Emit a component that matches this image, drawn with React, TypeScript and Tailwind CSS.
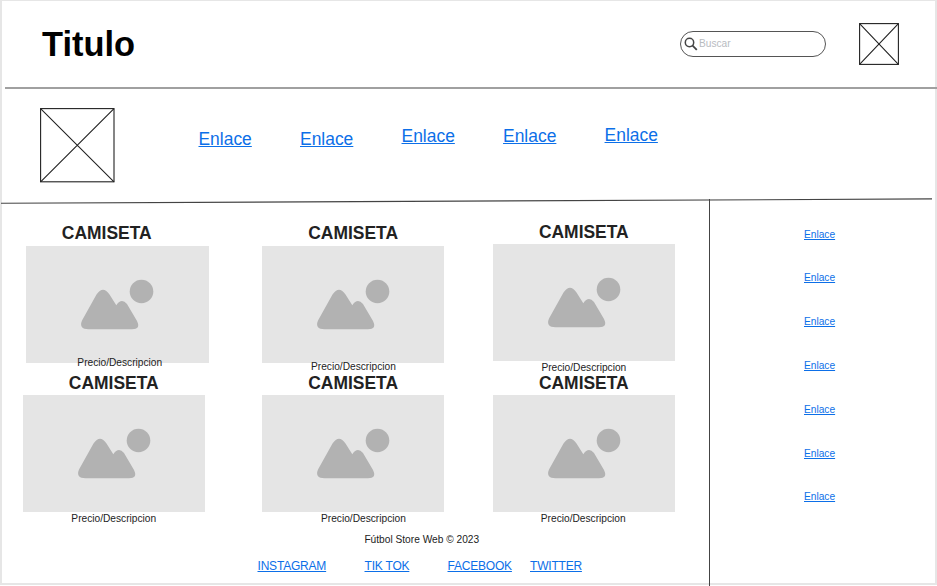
type CardProps = {
  card: string;
  title: string;
  image: string;
  caption: string;
};

const topRow: CardProps[] = [
  { card: "ml-[26px]", title: "-translate-x-[10.5px]", image: "mt-[2.5px]", caption: "-mt-[6px] translate-x-[2.5px]" },
  { card: "ml-[53.4px]", title: "", image: "mt-[2.5px]", caption: "-mt-[2px] translate-x-[0.3px]" },
  { card: "ml-[48.2px] -mt-px", title: "", image: "mt-[2px]", caption: "mt-px" },
];

const bottomRow: CardProps[] = [
  { card: "ml-[22.5px]", title: "", image: "mt-[2px]", caption: "mt-px" },
  { card: "ml-[56.9px]", title: "", image: "mt-[2px]", caption: "mt-px translate-x-[10.3px]" },
  { card: "ml-[48.2px]", title: "", image: "mt-[2px]", caption: "mt-px -translate-x-[0.6px]" },
];

const navLinks = ["mt-[3.5px]", "mt-[3.5px]", "mt-[0.5px]", "mt-[0.5px]", "mt-0"];
const sideLinks = ["mt-0", "mt-[31px]", "mt-[32px]", "mt-[32px]", "mt-[32px]", "mt-[32px]", "mt-[31px]"];

function CrossBox({ width, height, className }: { width: number; height: number; className: string }) {
  return (
    <svg width={width} height={height} className={`shrink-0 overflow-visible ${className}`} fill="none" stroke="#222" strokeWidth="1.1">
      <rect x="0.6" y="0.6" width={width - 1.2} height={height - 1.2} />
      <path d={`M0.6 0.6L${width - 0.6} ${height - 0.6}M${width - 0.6} 0.6L0.6 ${height - 0.6}`} />
    </svg>
  );
}

function Card({ card, title, image, caption }: CardProps) {
  return (
    <article className={`flex w-[182.5px] shrink-0 flex-col items-center ${card}`}>
      <h2 className={`text-[17.45px] leading-5 font-bold text-[#222] ${title}`}>CAMISETA</h2>
      <svg width="182.5" height="117" viewBox="0 0 182.5 117" className={`shrink-0 bg-[#e5e5e5] ${image}`} fill="#b2b2b2">
        <circle cx="115.5" cy="45.5" r="11.8" />
        <path d="M56 74.5L70.5 48.5Q77 39 83.5 48.5L90.3 59.2Q95.5 51.5 101 58L111 75Q115 83.2 106 83.2H62.5Q52.5 83.2 56 74.5Z" />
      </svg>
      <p className={`text-[10.18px] leading-3 text-[#222] ${caption}`}>Precio/Descripcion</p>
    </article>
  );
}

const link = "underline text-[#0c6fe8]";

export default function App() {
  return (
    <div className="relative flex h-[586px] w-[937px] flex-col overflow-hidden bg-white font-['Liberation_Sans',Arial,sans-serif]">
      <div className="pointer-events-none absolute inset-x-0 top-0 h-[585px] border-t border-r-2 border-b-2 border-l-2 border-[#e6e6e6]" />

      <header className="relative flex h-[87px] shrink-0 items-start">
        <h1 className="mt-[24px] ml-[42px] w-[638px] text-[34.4px] leading-10 font-bold text-black">Titulo</h1>
        <div className="mt-[31px] flex h-[26px] w-[146px] items-center rounded-full border border-[#555]">
          <svg width="14" height="14" viewBox="0 0 14 14" className="ml-[3px]" fill="none" stroke="#444">
            <circle cx="5.5" cy="5.5" r="4.2" strokeWidth="1.5" />
            <path d="M8.6 8.6L12.8 12.8" strokeWidth="1.8" />
          </svg>
          <span className="ml-px text-[10.18px] leading-3 text-[#b8bbbf]">Buscar</span>
        </div>
        <CrossBox width={40} height={42} className="mt-[23px] ml-[33px]" />
      </header>
      <div className="relative ml-[5px] h-[2px] shrink-0 bg-[#a0a0a0]" />

      <nav className="relative flex h-[109px] shrink-0 items-start">
        <CrossBox width={74.6} height={74.4} className="mt-[18.6px] ml-[40px]" />
        <div className="mt-[36px] ml-[83.9px] flex gap-[48.2px]">
          {navLinks.map((offset, i) => (
            <a key={i} className={`text-[17.45px] leading-5 ${link} ${offset}`}>Enlace</a>
          ))}
        </div>
      </nav>
      <svg width="937" height="7" className="relative shrink-0">
        <path d="M1 5.3L932 0.9" stroke="#444" strokeWidth="1.1" />
      </svg>

      <div className="relative -mt-[6px] flex h-[387px] shrink-0">
        <main className="flex w-[709px] shrink-0 flex-col pt-[24px]">
          <section className="flex h-[150px] shrink-0 items-start">
            {topRow.map((props, i) => <Card key={i} {...props} />)}
          </section>
          <section className="flex h-[152px] shrink-0 items-start">
            {bottomRow.map((props, i) => <Card key={i} {...props} />)}
          </section>
          <footer className="mt-[8.5px]">
            <p className="ml-[364.4px] text-[10.18px] leading-3 text-[#222]">Fútbol Store Web © 2023</p>
            <div className="mt-[13px] ml-[257.5px] flex text-[12px] leading-[14px] tracking-[-0.2px]">
              <a className={`w-[107px] ${link}`}>INSTAGRAM</a>
              <a className={`w-[83px] ${link}`}>TIK TOK</a>
              <a className={`w-[82.5px] ${link}`}>FACEBOOK</a>
              <a className={link}>TWITTER</a>
            </div>
          </footer>
        </main>
        <aside className="flex grow flex-col items-start border-l border-[#444] pt-[30px] pl-[94px]">
          {sideLinks.map((offset, i) => (
            <a key={i} className={`text-[10.18px] leading-3 ${link} ${offset}`}>Enlace</a>
          ))}
        </aside>
      </div>
    </div>
  );
}
